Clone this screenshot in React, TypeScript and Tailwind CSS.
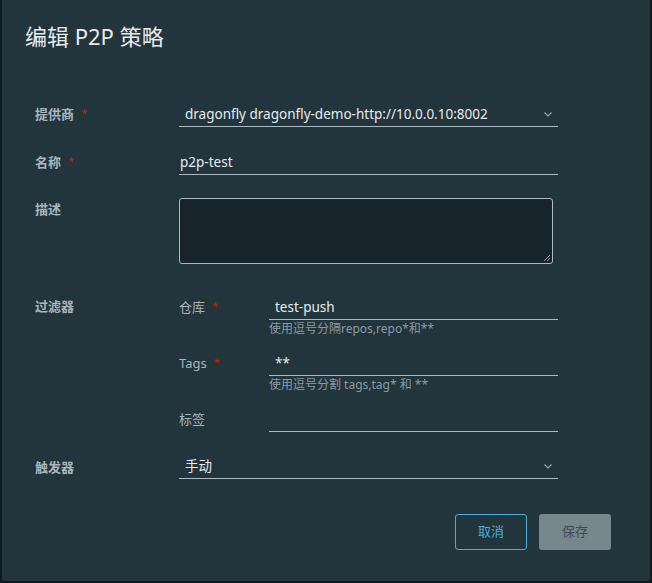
import React from 'react';

const FONT = '"Noto Sans", "Noto Sans CJK SC", sans-serif';

function Chevron() {
  return (
    <svg width="10" height="10" viewBox="0 0 10 10" className="shrink-0">
      <path d="M1.5 3.5 L5 7 L8.5 3.5" fill="none" stroke="#9aa8b0" strokeWidth="1.2" />
    </svg>
  );
}

function Req() {
  return <span className="ml-[7px] text-[11px] relative top-[-2px] text-[#c92100] font-normal">*</span>;
}

function Label({ children, req }: { children: React.ReactNode; req?: boolean }) {
  return (
    <div className="w-[144px] shrink-0 text-[13px] font-bold leading-[22px] text-[#a9b6be]">
      {children}
      {req && <Req />}
    </div>
  );
}

function SubField({ label, value, help, req }: { label: string; value?: string; help?: string; req?: boolean }) {
  return (
    <div className="flex">
      <div className="w-[90px] shrink-0 h-[24px] flex items-center text-[13px] text-[#a9b6be]">
        {label}
        {req && <Req />}
      </div>
      <div>
        <div className="w-[289px] h-[24px] border-b border-[#acbac3] pl-[6px] flex items-center text-[13.5px] text-[#e9ecef]">
          {value}
        </div>
        {help && <div className="h-[18px] leading-[18px] text-[12px] text-[#8c9ba3]">{help}</div>}
      </div>
    </div>
  );
}

export default function App() {
  return (
    <div className="w-[652px] h-[583px] bg-[#0f1b21] px-[2px] pb-[2px]" style={{ fontFamily: FONT }}>
      <div className="h-[581px] bg-[#22343c] rounded-b-[3px]">
        <div className="pt-[20px] pl-[23px] text-[22px] leading-[32px] text-[#e9ecef]">编辑 P2P 策略</div>

        <div className="pl-[33px] mt-[50px]">
          <div className="flex items-center h-[25px]">
            <Label req>提供商</Label>
            <div className="w-[379px] h-[25px] border-b border-[#acbac3] pl-[6px] pr-[5px] flex items-center justify-between text-[13.5px] text-[#e9ecef]">
              <span>dragonfly dragonfly-demo-http://10.0.0.10:8002</span>
              <Chevron />
            </div>
          </div>

          <div className="flex items-center h-[25px] mt-[23px]">
            <Label req>名称</Label>
            <div className="w-[379px] h-[25px] border-b border-[#acbac3] pl-[1px] flex items-center text-[13.5px] text-[#e9ecef]">
              p2p-test
            </div>
          </div>

          <div className="flex mt-[23px]">
            <Label>描述</Label>
            <div className="w-[374px] h-[66px] bg-[#17242b] border border-[#acbac3] rounded-[3px] relative">
              <svg width="8" height="8" viewBox="0 0 8 8" className="absolute right-[1px] bottom-[1px]">
                <path d="M7 1 L1 7 M7 4 L4 7" stroke="#8c9ba3" strokeWidth="1" />
              </svg>
            </div>
          </div>

          <div className="flex mt-[32px]">
            <div className="w-[144px] shrink-0 text-[13px] font-bold leading-[20px] text-[#a9b6be]">过滤器</div>
            <div className="flex flex-col gap-[14px]">
              <SubField label="仓库" req value="test-push" help="使用逗号分隔repos,repo*和**" />
              <SubField label="Tags" req value="**" help="使用逗号分割 tags,tag* 和 **" />
              <SubField label="标签" />
            </div>
          </div>

          <div className="flex items-center h-[25px] mt-[22px]">
            <Label>触发器</Label>
            <div className="w-[379px] h-[25px] border-b border-[#acbac3] pl-[6px] pr-[5px] flex items-center justify-between text-[13.5px] text-[#e9ecef]">
              <span>手动</span>
              <Chevron />
            </div>
          </div>
        </div>

        <div className="flex justify-end gap-[12px] pr-[39px] mt-[35px]">
          <button className="w-[72px] h-[36px] border border-[#49afd9] rounded-[3px] text-[13px] text-[#49afd9]">取消</button>
          <button className="w-[72px] h-[36px] bg-[#78868d] rounded-[3px] text-[13px] text-[#3b4a51]">保存</button>
        </div>
      </div>
    </div>
  );
}
